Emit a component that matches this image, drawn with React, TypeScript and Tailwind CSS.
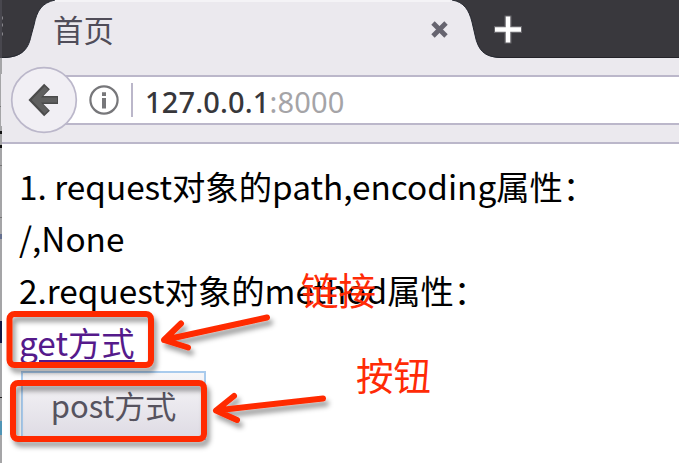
const cjk = "font-['Noto_Sans_CJK_SC',sans-serif]";

function TabStrip() {
  return (
    <div className="relative flex h-[58px] w-full items-center bg-[#39383d]">
      <svg className="absolute inset-0" width="677" height="58" viewBox="0 0 677 58" fill="none">
        <path d="M0 57.5H677" stroke="#242329" />
        <path
          d="M0 58C18 58 26 51 29 36L32 25C35 10 40 3 53 0H450C462 2 467 10 470 22L473 35C476 50 482 57 498 58Z"
          fill="#ebe9ee"
        />
        <path d="M0 57.5C18 57.5 26 51 29 36L32 25C35 10 40 3 53 0M450 0C462 2 467 10 470 22L473 35C476 50 482 57 498 57.5" stroke="#252830" strokeWidth="1" />
        <path d="M53 1H448" stroke="#f4f3f6" strokeWidth="2" />
        <path d="M0 18h1M0 25h1M0 34h1" stroke="#85848a" strokeWidth="3" />
      </svg>
      <span className={`relative ml-[51px] w-[376px] text-[30.4px] leading-[56px] text-[#504d59] ${cjk}`}>首页</span>
      <svg className="relative mt-px shrink-0" width="22" height="22" viewBox="0 0 22 22" fill="none">
        <path d="M4 4L17 17M17 4L4 17" stroke="#66646f" strokeWidth="4.8" />
      </svg>
      <svg className="relative ml-[42px] mt-px shrink-0" width="32" height="32" viewBox="0 0 32 32" fill="none">
        <path d="M15 1.5V29.5M1 15.5H29" stroke="#66656a" strokeWidth="7" />
        <path d="M15 2.5V28.5M2 15.5H28" stroke="#fff" strokeWidth="4.5" />
      </svg>
    </div>
  );
}

function NavBar() {
  return (
    <div className="flex h-[86px] flex-col border-b-2 border-[#bbb7ca] bg-[#ebe9ee] pt-[17px]">
      <div className="relative flex h-[50px] items-center border-y-2 border-[#bbb7ca] bg-white pl-[86px]">
        <div className="absolute -left-px -top-[3px] h-[52px] w-[42px] bg-[#ebe9ee]" />
        <svg className="absolute left-[8px] top-[-11px]" width="68" height="68" viewBox="0 0 68 68" fill="none">
          <circle cx="34" cy="34" r="32.3" fill="#f1eff4" stroke="#bbb7ca" strokeWidth="1.7" />
          <path d="M48 34H26M37 20.5L24 34L37 47.5" stroke="#4b4b4b" strokeWidth="8" />
          <path d="M47 34H26M36.5 22L25 34L36.5 46" stroke="#606060" strokeWidth="5" />
        </svg>
        <svg className="shrink-0" width="32" height="32" viewBox="0 0 32 32" fill="none">
          <circle cx="16" cy="16" r="13.6" stroke="#77777a" strokeWidth="2.2" />
          <path d="M16 8.2V12M16 14V24.5" stroke="#77777a" strokeWidth="4" />
        </svg>
        <span className="ml-[11px] h-[34px] w-[2px] bg-[#bbb7ca]" />
        <span className="ml-[12px] pt-[3px] font-['Noto_Sans',sans-serif] text-[29px] leading-[46px] tracking-[0.15px] text-[#a5a4a7]">
          <span className="font-medium text-[#37373b]">127.0.0.1</span>:8000
        </span>
      </div>
    </div>
  );
}

function Annotations() {
  return (
    <>
      <svg className="pointer-events-none absolute inset-0" width="679" height="463" viewBox="0 0 679 463" fill="none">
        <defs>
          <filter id="shadow" x="-20%" y="-50%" width="150%" height="220%">
            <feDropShadow dx="3" dy="5" stdDeviation="2.5" floodColor="#000" floodOpacity="0.38" />
          </filter>
        </defs>
        <g stroke="#ff2b06" strokeWidth="6" strokeLinecap="round" strokeLinejoin="round">
          <rect x="9.5" y="314" width="141.5" height="51" rx="5" filter="url(#shadow)" />
          <rect x="13" y="383" width="191" height="56" rx="5" filter="url(#shadow)" />
          <path d="M267 317.5L164 340L181 323.5M164 340L188 347.5" filter="url(#shadow)" />
          <path d="M323 398.5L216 410.5L234 396M216 410.5L237 420" filter="url(#shadow)" />
        </g>
      </svg>
      <span className={`absolute left-[301px] top-[262px] text-[37.5px] leading-[54px] text-[#ff2b06] ${cjk}`}>链接</span>
      <span className={`absolute left-[356px] top-[347px] text-[37.5px] leading-[54px] text-[#ff2b06] ${cjk}`}>按钮</span>
    </>
  );
}

export default function App() {
  return (
    <div className="relative flex h-[463px] w-[679px] overflow-hidden bg-white">
      <div className="flex w-[2px] shrink-0 flex-col bg-[#a5a5a7]">
        <div className="h-[58px] bg-[#48474e]" />
        <div className="mt-[48px] h-px bg-[#777]" />
        <div className="mt-[24px] h-[3px] bg-[#111]" />
        <div className="mt-[11px] h-[3px] bg-[#111]" />
        <div className="mt-[17px] h-px bg-[#777]" />
        <div className="mt-[51px] h-px bg-[#777]" />
        <div className="mt-[16px] h-[5px] bg-[#65708f]" />
        <div className="mt-[82px] h-[22px] bg-[#101944]" />
        <div className="mt-[54px] h-px bg-[#222]" />
        <div className="mt-[23px] h-[14px] bg-[#4f94b5]" />
      </div>
      <div className="flex w-[677px] flex-col">
        <TabStrip />
        <NavBar />
        <main className={`flex flex-col items-start pl-[17px] pt-[16px] text-[33.35px] leading-[52px] text-black ${cjk}`}>
          <p className="whitespace-pre">1. request对象的path,encoding属性：</p>
          <p>/,None</p>
          <p>2.request对象的method属性：</p>
          <a className="text-[#551a8b] underline decoration-2 underline-offset-[4px]">get方式</a>
          <button className="ml-[2px] mt-[3px] h-[69px] w-[185px] border-2 border-[#a9cbed] bg-linear-to-b from-[#f7f6f8] to-[#dedbe4] pb-[2px] text-[31px] leading-[60px] text-[#56535f]">
            post方式
          </button>
        </main>
      </div>
      <Annotations />
    </div>
  );
}
